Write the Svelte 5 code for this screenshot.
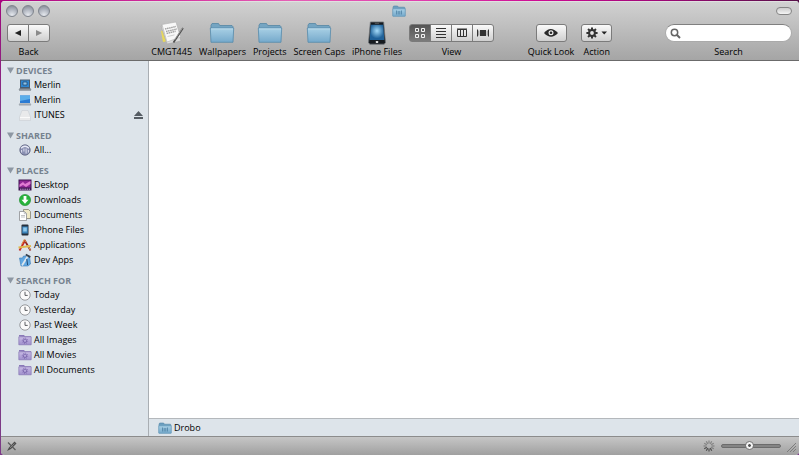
<script lang="ts">
  type Item = { name: string; icon: string; ejectable?: boolean };
  type Group = { title: string; items: Item[] };

  const groups: Group[] = [
    {
      title: 'DEVICES',
      items: [
        { name: 'Merlin', icon: 'laptop' },
        { name: 'Merlin', icon: 'screen' },
        { name: 'ITUNES', icon: 'drive', ejectable: true }
      ]
    },
    { title: 'SHARED', items: [{ name: 'All...', icon: 'network' }] },
    {
      title: 'PLACES',
      items: [
        { name: 'Desktop', icon: 'desktop' },
        { name: 'Downloads', icon: 'download' },
        { name: 'Documents', icon: 'documents' },
        { name: 'iPhone Files', icon: 'phone' },
        { name: 'Applications', icon: 'apps' },
        { name: 'Dev Apps', icon: 'dev' }
      ]
    },
    {
      title: 'SEARCH FOR',
      items: [
        { name: 'Today', icon: 'clock' },
        { name: 'Yesterday', icon: 'clock' },
        { name: 'Past Week', icon: 'clock' },
        { name: 'All Images', icon: 'smart' },
        { name: 'All Movies', icon: 'smart' },
        { name: 'All Documents', icon: 'smart' }
      ]
    }
  ];

  const shortcuts = [
    { name: 'CMGT445', icon: 'notes' },
    { name: 'Wallpapers', icon: 'folder' },
    { name: 'Projects', icon: 'folder' },
    { name: 'Screen Caps', icon: 'folder' },
    { name: 'iPhone Files', icon: 'iphone' }
  ];

  const views = ['Icons', 'List', 'Columns', 'Cover Flow'];
  const spokes = [0, 30, 60, 90, 120, 150, 180, 210, 240, 270, 300, 330];
  const teeth = [0, 45, 90, 135, 180, 225, 270, 315];

  let view = $state('Icons');
  let query = $state('');
  let iconSize = $state(46);
  let closed: Record<string, boolean> = $state({});
</script>

{#snippet smallFolder()}
  <svg width="14" height="12" viewBox="0 0 14 12" aria-hidden="true">
    <path d="M1 2.5 1.6 1h4l.8 1.2h6L13 3v8H1z" fill="#6c9fbf" stroke="#5488aa" stroke-width=".6" />
    <path d="M.8 3.8h12.4v7.4H.8z" fill="url(#folder-blue)" stroke="#6298b9" stroke-width=".6" />
    <path d="M4.5 5.5v4M6.2 6v3.5M7.8 6v3.5M9.5 5.5v4" stroke="#5588aa" stroke-width=".9" />
  </svg>
{/snippet}

{#snippet sideIcon(icon: string)}
  <svg width="14" height="14" viewBox="0 0 14 14" aria-hidden="true">
    {#if icon === 'laptop'}
      <path d="M2 1.5h10V10H2z" fill="#4a5c70" />
      <path d="M3 2.5h8V9H3z" fill="#2f86cf" />
      <path d="M5 4h4v3H5z" fill="#8cc3ea" stroke="#1c4168" stroke-width=".7" />
      <path d="M1.5 10h11l1 2H.5z" fill="#98a0a8" />
      <path d="M2 10.5h10M1 12.2h12" stroke="#5c646d" stroke-width=".7" />
    {:else if icon === 'screen'}
      <path d="M2 2.5h10V10H2z" fill="#2a7bd3" />
      <path d="M2 2.5h10V6L2 8z" fill="#5aaeea" />
      <path d="M1.5 10h11l1 2H.5z" fill="#b4bbc2" />
      <path d="M1 12h12" stroke="#838b94" stroke-width=".7" />
    {:else if icon === 'drive'}
      <path d="M4 2.5h6l2.5 6.5v3.5h-11V9z" fill="#e9eaeb" stroke="#cacfd3" stroke-width=".6" />
      <path d="M2 9.5h10" stroke="#fafafa" />
    {:else if icon === 'network'}
      <circle cx="7" cy="7" r="5.2" fill="#8a90b2" stroke="#5d627f" stroke-width=".8" />
      <path d="M3 5.2q4-4 8 0" fill="none" stroke="#e7e9f5" stroke-width="1.3" />
      <path d="M3.6 7v2.5M5.9 5.5v3M8.1 5.5v5M10.4 7v2.5" stroke="#e7e9f5" stroke-width=".9" />
    {:else if icon === 'desktop'}
      <path d="M.5 1.5h13v11H.5z" fill="#3e1450" />
      <path d="M1.5 2.5h11v7h-11z" fill="#8f2794" />
      <path d="M1.5 6.5 5 4l2 2 5.5-3v3L8 9 5 7l-3.500 2z" fill="#e17bd2" />
      <path d="M2 11.2h10" stroke="#c9a4d6" stroke-dasharray="1.5 .7" />
    {:else if icon === 'download'}
      <circle cx="7" cy="7" r="5.6" fill="#28b43c" stroke="#1c8c2d" stroke-width=".6" />
      <path d="M5.6 3h2.8v3.7h2.1L7 10.8 3.5 6.7h2.1z" fill="#fff" />
    {:else if icon === 'documents'}
      <path d="M5.5 1.5h5l2 2v7h-7z" fill="#efe9c6" stroke="#858271" stroke-width=".8" />
      <path d="M1.5 3.5h5l2 2v7h-7z" fill="#fff" stroke="#8b8d90" stroke-width=".8" />
      <path d="M6.3 3.7v2h2M3 7.5h4M3 9h4" fill="none" stroke="#a8abae" stroke-width=".7" />
    {:else if icon === 'phone'}
      <rect x="3.5" y="1.5" width="7" height="11" rx="1" fill="#26303c" />
      <path d="M4.2 3.5h5.6v7H4.2z" fill="#3b84bb" />
      <path d="M5.2 4.5h3.6v4H5.2z" fill="#8fc9ed" />
    {:else if icon === 'apps'}
      <path d="m1.5 12.5 5-9" stroke="#c92b20" stroke-width="1.8" />
      <path d="m6.5 2 6 10.5" stroke="#8d1e1c" stroke-width="1.7" />
      <path d="M.5 9.5 13 8" stroke="#dfb94f" stroke-width="1.8" />
      <path d="m3.5 6.5 2.8-5 2 3" fill="none" stroke="#e08a3c" />
      <path d="m9.5 7 2.8 5" stroke="#f0c760" stroke-width=".8" />
    {:else if icon === 'dev'}
      <path d="M1.5 5h3l1-2h6l1 8-2.5 2H3z" fill="#62a9e3" stroke="#397ab5" stroke-width=".6" />
      <path d="M4 12.5 10 2.8" stroke="#dbe5ee" stroke-width="1.8" />
      <path d="m7.8 1.5 4.5 2.6" stroke="#38434f" stroke-width="1.8" />
      <path d="m8.8 6 .8 6" stroke="#224b75" />
    {:else if icon === 'clock'}
      <circle cx="7" cy="7" r="5.2" fill="#fbfbfb" stroke="#8c8f92" stroke-width=".9" />
      <path d="M7 3.8v3.6h2.7" fill="none" stroke="#4b4d50" stroke-width=".9" />
    {:else if icon === 'smart'}
      <path d="M1 3.5V2h5l1 1.2h6v1z" fill="#8977b8" />
      <path d="M.8 3.8h12.4v8H.8z" fill="url(#folder-purple)" stroke="#7d6bad" stroke-width=".6" />
      <circle cx="7" cy="7.8" r="1.7" fill="none" stroke="#7864aa" stroke-width=".9" />
      <circle cx="7" cy="7.8" r="2.7" fill="none" stroke="#7864aa" stroke-width=".8" stroke-dasharray="1 1.1" />
    {/if}
  </svg>
{/snippet}

<div class="desktop">
  <div class="window">
    <svg class="defs" width="0" height="0" aria-hidden="true">
      <defs>
        <linearGradient id="folder-blue" x2="0" y2="1">
          <stop offset="0" stop-color="#a9d0e5" />
          <stop offset="1" stop-color="#75a9cb" />
        </linearGradient>
        <linearGradient id="folder-purple" x2="0" y2="1">
          <stop offset="0" stop-color="#c9bce6" />
          <stop offset="1" stop-color="#9f8fcc" />
        </linearGradient>
        <radialGradient id="phone-glow" cy=".4">
          <stop offset="0" stop-color="#a5dcfa" />
          <stop offset="1" stop-color="#1f6199" />
        </radialGradient>
      </defs>
    </svg>

    <header>
      <div class="titlebar">
        <div class="lights">
          <button aria-label="Close"></button>
          <button aria-label="Minimize"></button>
          <button aria-label="Zoom"></button>
        </div>
        {@render smallFolder()}
        <button class="pill" aria-label="Toggle toolbar"></button>
      </div>

      <div class="toolbar">
        <div class="tool">
          <div class="control segmented">
            <button aria-label="Back">
              <svg width="8" height="8" viewBox="0 0 8 8"><path d="M7 1v6L.8 4z" fill="#222" /></svg>
            </button>
            <button aria-label="Forward">
              <svg width="8" height="8" viewBox="0 0 8 8"><path d="M1 1v6l6.2-3z" fill="#8b8b8b" /></svg>
            </button>
          </div>
          <span>Back</span>
        </div>
        <div class="space wide"></div>

        {#each shortcuts as shortcut}
          <button class="tool">
            <span class="control">
              {#if shortcut.icon === 'folder'}
                <svg width="26" height="22" viewBox="0 0 26 22" aria-hidden="true">
                  <path d="M2 7V3.2L3 1.5h6.5l1.3 2H23l1 1.2V7z" fill="#75a5c2" stroke="#5687a5" stroke-width=".8" />
                  <path d="M1.3 6h23.4l-.7 14.3H2z" fill="url(#folder-blue)" stroke="#568aab" stroke-width=".8" />
                  <path d="M2 6.9h22" stroke="#c3e0ef" stroke-width=".8" />
                </svg>
              {:else if shortcut.icon === 'notes'}
                <svg width="26" height="24" viewBox="0 0 26 24" aria-hidden="true">
                  <path d="m2 10 4-1 3 11-5 1z" fill="#e8d95a" />
                  <path d="m2 5 15-2 5 17-14 3z" fill="#dcdcdc" stroke="#a6a6a6" stroke-width=".6" />
                  <path d="M3 3.5 17 1l4.5 15L8 21z" fill="#f8f8f8" stroke="#b0b0b0" stroke-width=".6" />
                  <path d="m6 8 11-2.5M7 10.5 18 8M7.6 12.5l9-2.2" stroke="#a3a3a3" stroke-width="1.4" stroke-dasharray="1.6 .5" />
                  <path d="m8.5 15.5 7-1.6" stroke="#d0d0d0" />
                  <path d="M24 7 14.5 21.5" stroke="#4e4e4e" stroke-width="1.7" />
                  <path d="m23.5 7-8 12" stroke="#c4c4c4" stroke-width=".6" />
                </svg>
              {:else}
                <svg width="20" height="24" viewBox="0 0 20 24" aria-hidden="true">
                  <path d="M3.4 1h13.2l1.9 20.5-1.3 1.7H2.8l-1.3-1.7z" fill="#161a1f" stroke="#6f7479" stroke-width=".8" />
                  <path d="M3.7 3.7h12.6l1 15.3H2.7z" fill="url(#phone-glow)" />
                  <path d="M7.8 2.3h4.4" stroke="#777" stroke-width=".7" />
                  <rect x="8.8" y="20" width="2.4" height="2" rx=".6" fill="#ddd" />
                </svg>
              {/if}
            </span>
            <span>{shortcut.name}</span>
          </button>
        {/each}

        <div class="tool">
          <div class="control segmented" role="group" aria-label="View">
            {#each views as name}
              <button aria-label={name} aria-pressed={view === name} class:active={view === name} onclick={() => (view = name)}>
                <svg width="14" height="10" viewBox="0 0 14 10">
                  {#if name === 'Icons'}
                    <path d="M2.5.5h3v3h-3zM8.5.5h3v3h-3zM2.5 6.5h3v3h-3zM8.5 6.5h3v3h-3z" fill="none" stroke="currentColor" />
                  {:else if name === 'List'}
                    <path d="M2 .5h10M2 3.5h10M2 6.5h10M2 9.5h10" stroke="currentColor" />
                  {:else if name === 'Columns'}
                    <path d="M2.5 1.5h9v7h-9zM5.5 1v8M8.5 1v8" fill="none" stroke="currentColor" />
                    <path d="M2 1h10" stroke="currentColor" />
                  {:else}
                    <path d="M4 2h6v6H4z" fill="currentColor" />
                    <path d="M1.5 1.5v7M12.5 1.5v7" stroke="currentColor" />
                    <path d="M2.8 2.5v5M11.2 2.5v5" stroke="#888" />
                  {/if}
                </svg>
              </button>
            {/each}
          </div>
          <span>View</span>
        </div>
        <div class="space"></div>

        <div class="tool">
          <div class="control segmented single">
            <button aria-label="Quick Look">
              <svg width="16" height="10" viewBox="0 0 16 10">
                <path d="M1 5q6.5-8 14 0-7 7.5-14 0z" fill="#292929" />
                <circle cx="8" cy="4.7" r="2.5" fill="#eee" />
                <circle cx="8" cy="4.7" r="1.3" fill="#292929" />
              </svg>
            </button>
          </div>
          <span>Quick Look</span>
        </div>
        <div class="tool">
          <div class="control segmented single">
            <button aria-label="Action">
              <svg width="22" height="12" viewBox="0 0 22 12">
                <g stroke="#333" stroke-width="2">
                  {#each teeth as angle}
                    <path d="M6 .4v3" transform="rotate({angle} 6 6)" />
                  {/each}
                </g>
                <circle cx="6" cy="6" r="2.9" fill="none" stroke="#333" stroke-width="2" />
                <path d="M15.5 4.5H21l-2.8 3z" fill="#222" />
              </svg>
            </button>
          </div>
          <span>Action</span>
        </div>
        <div class="space middle"></div>

        <div class="tool">
          <div class="control">
            <div class="search">
              <svg width="11" height="11" viewBox="0 0 11 11" aria-hidden="true">
                <circle cx="4.5" cy="4.5" r="3.2" fill="none" stroke="#666" stroke-width="1.5" />
                <path d="m7 7 3 3" stroke="#666" stroke-width="1.9" />
              </svg>
              <input id="search" type="text" bind:value={query} />
            </div>
          </div>
          <label for="search">Search</label>
        </div>
      </div>
    </header>

    <div class="body">
      <nav>
        {#each groups as group}
          <section>
            <button class="heading" aria-expanded={!closed[group.title]} onclick={() => (closed[group.title] = !closed[group.title])}>
              <svg width="7" height="7" viewBox="0 0 7 7" aria-hidden="true"><path d="M0 .5h7l-3.5 6z" fill="#8d97a3" /></svg>
              {group.title}
            </button>
            {#if !closed[group.title]}
              <ul>
                {#each group.items as item}
                  <li>
                    <a href="#files">
                      {@render sideIcon(item.icon)}
                      {item.name}
                    </a>
                    {#if item.ejectable}
                      <button aria-label="Eject">
                        <svg width="9" height="8" viewBox="0 0 9 8"><path d="M4.5 0 9 5H0zM0 6h9v2H0z" fill="#555c63" /></svg>
                      </button>
                    {/if}
                  </li>
                {/each}
              </ul>
            {/if}
          </section>
        {/each}
      </nav>

      <main id="files">
        <div class="files"></div>
        <div class="path">
          {@render smallFolder()}
          <span>Drobo</span>
        </div>
      </main>
    </div>

    <footer>
      <svg width="12" height="12" viewBox="0 0 12 12" aria-hidden="true">
        <path d="m1 11 2-3.5 5.5-6 2 2L5 9z" fill="#4c4c4c" />
        <path d="M2 2.5 9.5 10" stroke="#5c5c5c" stroke-width="1.2" />
        <path d="m4 8 4.5-4.5" stroke="#999" stroke-width=".7" />
      </svg>
      <div class="right">
        <svg width="12" height="12" viewBox="0 0 12 12" aria-hidden="true">
          {#each spokes as angle, i}
            <path d="M6 .5v3" stroke="#444" stroke-width="1.2" opacity={i > 4 && i < 9 ? 0.9 : 0.45} transform="rotate({angle} 6 6)" />
          {/each}
        </svg>
        <input type="range" min="0" max="100" bind:value={iconSize} aria-label="Icon size" />
        <svg class="grip" width="9" height="9" viewBox="0 0 9 9" aria-hidden="true">
          <path d="m0 9 9-9M3 9l6-6M6 9l3-3" stroke="#777" stroke-width=".9" />
        </svg>
      </div>
    </footer>
  </div>
</div>

<style>
  :global(body) {
    font-family: 'Open Sans', 'Noto Sans', sans-serif;
    font-size: 9px;
    font-weight: 500;
    color: #000;
  }

  .desktop {
    box-sizing: border-box;
    height: 100vh;
    padding: 1px 0 0 1px;
    background:
      linear-gradient(90deg, #a8047e, #d22d9c 20%, #e55fb5 36%, #e03fae 52%, #cc0a92 68%, #a00878 82%, #561048) top / 100% 6px no-repeat,
      linear-gradient(#a0067c, #7c3a86 30%, #7c3a86);
  }

  .window {
    display: flex;
    flex-direction: column;
    height: 100%;
    overflow: hidden;
    border-radius: 4px;
    background: #dde4ea;
  }

  button {
    margin: 0;
    padding: 0;
    border: 0;
    background: none;
    font: inherit;
    color: inherit;
  }

  svg {
    display: block;
    flex: none;
  }

  .defs {
    position: absolute;
  }

  header {
    background: linear-gradient(#d2d2d2, #a5a5a5);
    border-bottom: 1px solid #6b6b6b;
    box-shadow: inset 0 1px #e0e0e0;
  }

  .titlebar {
    display: grid;
    grid-template-columns: 1fr auto 1fr;
    align-items: center;
    height: 19px;
    padding: 0 7px 0 5px;
  }

  .lights {
    display: flex;
    gap: 4px;
  }

  .lights button {
    box-sizing: border-box;
    width: 12px;
    height: 12px;
    border: 1px solid #7f848d;
    border-radius: 50%;
    background: radial-gradient(circle at 50% 90%, #e6e9ee, #b3b8c2 50%, #7f848e);
  }

  .pill {
    justify-self: end;
    box-sizing: border-box;
    width: 16px;
    height: 8px;
    border: 1px solid #858585;
    border-radius: 4px;
    background: linear-gradient(#ccc, #f4f4f4);
  }

  .toolbar {
    display: flex;
    gap: 7px;
    height: 40px;
    padding: 0 7px 0 6px;
  }

  .tool {
    display: flex;
    flex-direction: column;
    align-items: center;
    line-height: 12px;
    white-space: nowrap;
  }

  .control {
    display: flex;
    align-items: center;
    justify-content: center;
    height: 26px;
  }

  .space {
    flex: 20;
  }

  .space.middle {
    flex: 39;
  }

  .space.wide {
    flex: 88;
  }

  .segmented button {
    box-sizing: border-box;
    display: flex;
    align-items: center;
    justify-content: center;
    width: 22px;
    height: 18px;
    margin-left: -1px;
    border: 1px solid #7b7b7b;
    background: linear-gradient(#fafafa, #cfcfcf);
    color: #333;
  }

  .segmented button:first-child {
    margin-left: 0;
    border-radius: 3px 0 0 3px;
  }

  .segmented button:last-child {
    border-radius: 0 3px 3px 0;
  }

  .segmented button.active {
    background: linear-gradient(#555, #7b7b7b);
    color: #f2f2f2;
  }

  .segmented.single button {
    width: 31px;
    border-radius: 3px;
  }

  .search {
    box-sizing: border-box;
    display: flex;
    align-items: center;
    gap: 4px;
    height: 18px;
    padding: 0 4px;
    border: 1px solid #aaa;
    border-top-color: #808080;
    border-radius: 9px;
    background: #fff;
  }

  .search input {
    width: 102px;
    padding: 0;
    border: 0;
    outline: 0;
    background: none;
    font: inherit;
  }

  .body {
    flex: 1;
    display: flex;
    min-height: 0;
  }

  nav {
    box-sizing: border-box;
    width: 148px;
    padding: 2px 5px 0 6px;
    overflow: hidden;
    border-right: 1px solid #a9aeb3;
    background: #dde4ea;
  }

  section {
    margin-bottom: 6px;
  }

  .heading {
    display: flex;
    align-items: center;
    gap: 2px;
    height: 14px;
    font-weight: 700;
    color: #76828f;
  }

  ul {
    margin: 0;
    padding: 0;
    list-style: none;
  }

  li {
    display: flex;
    align-items: center;
    justify-content: space-between;
    height: 15px;
    padding-left: 11px;
  }

  a {
    display: flex;
    align-items: center;
    gap: 2px;
    color: inherit;
    text-decoration: none;
  }

  main {
    flex: 1;
    display: flex;
    flex-direction: column;
    background: #fff;
  }

  .files {
    flex: 1;
  }

  .path {
    display: flex;
    align-items: center;
    gap: 2px;
    height: 17px;
    padding-left: 9px;
    border-top: 1px solid #b4b8bc;
    background: #dde4ea;
  }

  footer {
    display: flex;
    align-items: center;
    justify-content: space-between;
    height: 18px;
    padding: 0 3px 0 5px;
    border-top: 1px solid #8c8c8c;
    background: linear-gradient(#c6c6c6, #a0a0a0);
  }

  .right {
    display: flex;
    align-items: center;
    gap: 6px;
  }

  .grip {
    align-self: flex-end;
  }

  input[type='range'] {
    appearance: none;
    width: 60px;
    height: 10px;
    margin: 0;
    background: none;
  }

  input[type='range']::-webkit-slider-runnable-track {
    box-sizing: border-box;
    height: 4px;
    border: 1px solid #6c6c6c;
    border-radius: 2px;
    background: #858585;
  }

  input[type='range']::-webkit-slider-thumb {
    box-sizing: border-box;
    appearance: none;
    width: 9px;
    height: 9px;
    margin-top: -4px;
    border: 1px solid #777;
    border-radius: 50%;
    background: radial-gradient(#555 20%, #f4f4f4 35%);
  }
</style>
